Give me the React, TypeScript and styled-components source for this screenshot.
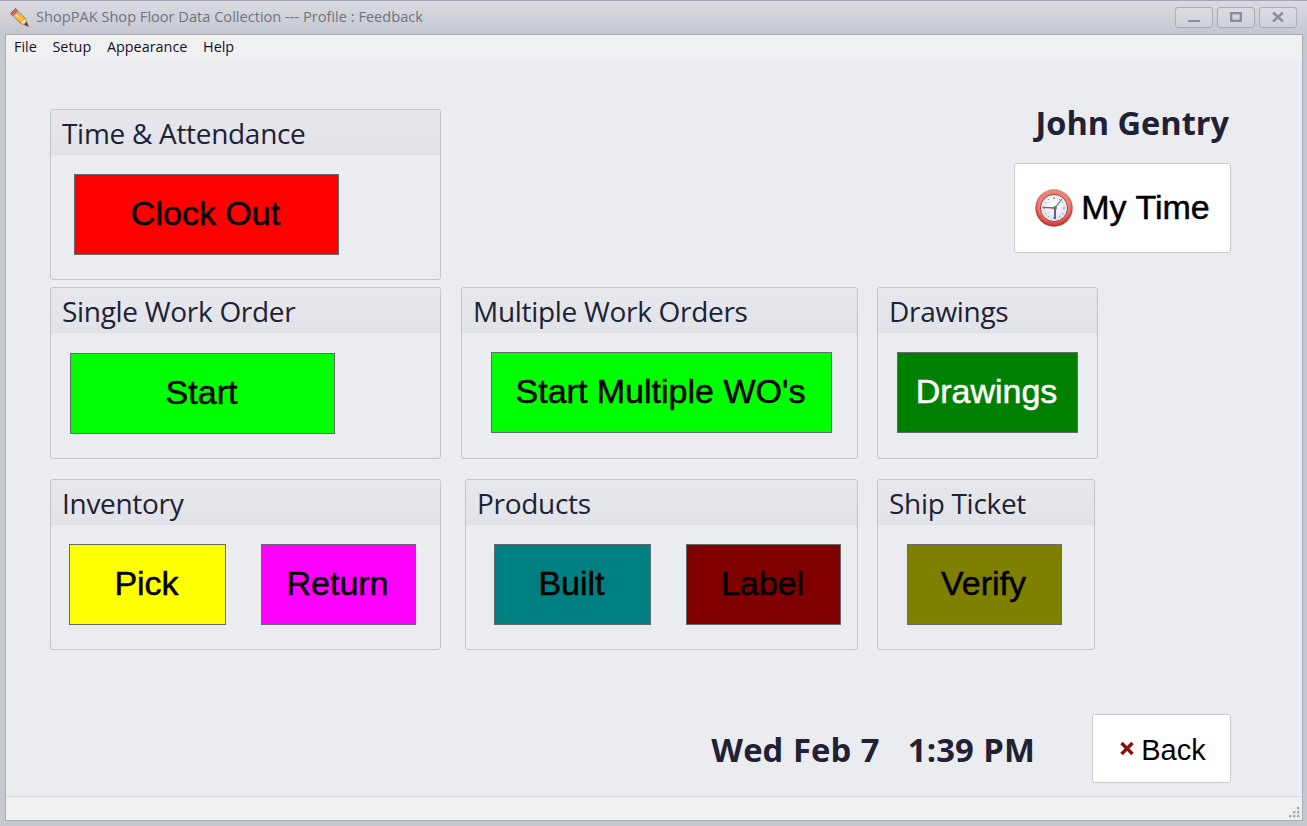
import React from "react";
import styled, { createGlobalStyle } from "styled-components";

const Global = createGlobalStyle`
  html, body { margin: 0; padding: 0; background: #c6c8d0; }
  * { box-sizing: border-box; }
`;

const Frame = styled.div`
  width: 1307px;
  height: 826px;
  display: flex;
  flex-direction: column;
  overflow: hidden;
  background: #c6c8d0;
  border-top: 1px solid #a4a6b4;
`;

const TitleBar = styled.div`
  height: 33px;
  flex: none;
  display: flex;
  align-items: center;
  padding: 0 10px 0 9px;
  background: linear-gradient(#dadbe1, #c5c7cf);
`;

const TitleText = styled.span`
  margin-left: 6px;
  padding-bottom: 3px;
  flex: 1;
  font: 14.6px "Open Sans", "Noto Sans", sans-serif;
  color: #6f7384;
  white-space: nowrap;
`;

const WinButtons = styled.div`
  display: flex;
  gap: 4px;
  margin-top: -1px;
`;

const WinButton = styled.div`
  width: 38px;
  height: 21px;
  border: 1px solid #a9abb5;
  border-radius: 3px;
  background: linear-gradient(#dcdde2, #cfd1d8);
  display: flex;
  align-items: center;
  justify-content: center;
`;

const Client = styled.div`
  flex: 1;
  min-height: 0;
  margin: 0 4px 5px 5px;
  border: 1px solid #a9abb7;
  display: flex;
  flex-direction: column;
  background: #ebecf0;
`;

const MenuBar = styled.div`
  height: 25px;
  flex: none;
  display: flex;
  gap: 15.7px;
  align-items: center;
  padding: 0 0 3px 8px;
  background: #f0f0f0;
  font: 14.4px "Open Sans", "Noto Sans", sans-serif;
  color: #14142a;
`;

const MenuItem = styled.span``;

const Body = styled.div`
  flex: 1;
  min-height: 0;
  display: flex;
  flex-direction: column;
  padding: 49px 0 0 44px;
`;

const Row = styled.div<{ $mt?: number }>`
  display: flex;
  align-items: flex-start;
  margin-top: ${(p) => p.$mt ?? 0}px;
`;

const Panel = styled.section<{ $w: number; $h: number; $ml?: number }>`
  width: ${(p) => p.$w}px;
  height: ${(p) => p.$h}px;
  margin-left: ${(p) => p.$ml ?? 0}px;
  flex: none;
  border: 1px solid #c4c5cc;
  border-radius: 3px;
  background: #ebecf0;
  overflow: hidden;
`;

const PanelTitle = styled.h2`
  margin: 0;
  height: 45px;
  padding: 2px 0 0 11px;
  display: flex;
  align-items: center;
  background: linear-gradient(#e7e8ec, #e2e3e8);
  border-bottom: 1px solid #dfe0e5;
  font: 400 28px "Open Sans", "Noto Sans", sans-serif;
  letter-spacing: -0.3px;
  color: #212135;
  white-space: nowrap;
`;

const PanelBody = styled.div<{ $pl: number; $pt: number; $gap?: number }>`
  display: flex;
  gap: ${(p) => p.$gap ?? 0}px;
  padding: ${(p) => p.$pt}px 0 0 ${(p) => p.$pl}px;
`;

const ActionButton = styled.button<{ $w: number; $bg: string; $fg?: string }>`
  width: ${(p) => p.$w}px;
  height: 81px;
  flex: none;
  padding: 0 2px 3px 0;
  background: ${(p) => p.$bg};
  border: 1px solid #666a70;
  color: ${(p) => p.$fg ?? "#000"};
  font: 400 34px "Liberation Sans", Arial, sans-serif;
  -webkit-text-stroke: 0.5px currentColor;
`;

const SideColumn = styled.div`
  flex: none;
  width: 217px;
  margin-left: 573px;
  display: flex;
  flex-direction: column;
  align-items: flex-end;
`;

const UserName = styled.div`
  margin: -9px 2px 0 0;
  height: 63px;
  font: 700 32.5px "Open Sans", "Noto Sans", sans-serif;
  color: #212135;
  white-space: nowrap;
`;

const WhiteButton = styled.button<{ $w: number; $h: number; $gap: number; $size: number; $pl?: number }>`
  width: ${(p) => p.$w}px;
  height: ${(p) => p.$h}px;
  display: flex;
  align-items: center;
  justify-content: center;
  gap: ${(p) => p.$gap}px;
  padding: 0 0 0 ${(p) => p.$pl ?? 0}px;
  background: #fff;
  border: 1px solid #c8c9ce;
  border-radius: 3px;
  color: #000;
  font: 400 ${(p) => p.$size}px "Liberation Sans", Arial, sans-serif;
`;

const MyTimeLabel = styled.span`
  -webkit-text-stroke: 0.5px currentColor;
  padding-bottom: 2px;
`;

const BackLabel = styled.span`
  padding-top: 3px;
`;

const Footer = styled.div`
  display: flex;
  justify-content: flex-end;
  align-items: center;
  gap: 57px;
  margin-top: 64px;
  padding-right: 71px;
`;

const DateText = styled.div`
  padding-top: 2px;
  font: 700 32.8px "Open Sans", "Noto Sans", sans-serif;
  letter-spacing: 0.1px;
  word-spacing: 0.8px;
  color: #212135;
  white-space: pre;
`;

const StatusBar = styled.div`
  height: 24px;
  flex: none;
  border-top: 1px solid #d9dade;
  background: #f0f0f0;
  display: flex;
  justify-content: flex-end;
  align-items: flex-end;
  padding: 0 2px 2px 0;
`;

const Pencil = () => (
  <svg width="21" height="21" viewBox="0 0 21 21">
    <path d="M1.5 6.5 L6.5 1.5 L16 11 L19.5 19.5 L11 16 Z" fill="#f6b72c" stroke="#a9712a" strokeWidth="0.7" strokeLinejoin="round" />
    <path d="M1.5 6.5 L6.5 1.5 L9 4 L4 9 Z" fill="#e0635a" stroke="#a34a44" strokeWidth="0.6" />
    <path d="M4 9 L9 4 L10.5 5.5 L5.5 10.5 Z" fill="#b9b6ad" />
    <path d="M7 8 L14 15" stroke="#fde08a" strokeWidth="1.6" />
    <path d="M9.5 11.5 L14.5 16" stroke="#d98a1e" strokeWidth="0.9" />
    <path d="M11 16 L16 11 L19.5 19.5 Z" fill="#efd6a6" stroke="#a9712a" strokeWidth="0.4" />
    <path d="M17.3 14.8 L19.5 19.5 L15 17.6 Z" fill="#4a3d33" />
  </svg>
);

const MinIcon = () => (
  <svg width="12" height="10" viewBox="0 0 12 10"><rect x="0" y="8" width="12" height="2.4" fill="#8c8e9c" /></svg>
);
const MaxIcon = () => (
  <svg width="12" height="10" viewBox="0 0 12 10"><rect x="1.2" y="1.2" width="9.6" height="7.6" fill="none" stroke="#8c8e9c" strokeWidth="2.4" /></svg>
);
const CloseIcon = () => (
  <svg width="12" height="10" viewBox="0 0 12 10"><path d="M1 0.5 L11 9.5 M11 0.5 L1 9.5" stroke="#8c8e9c" strokeWidth="2.6" /></svg>
);

const ClockIcon = () => (
  <svg width="38" height="38" viewBox="0 0 38 38">
    <defs>
      <radialGradient id="rim" cx="50%" cy="42%" r="58%">
        <stop offset="70%" stopColor="#e9837a" />
        <stop offset="86%" stopColor="#d2483f" />
        <stop offset="100%" stopColor="#b5342c" />
      </radialGradient>
      <radialGradient id="face" cx="50%" cy="40%" r="60%">
        <stop offset="0%" stopColor="#ffffff" />
        <stop offset="100%" stopColor="#d6deea" />
      </radialGradient>
    </defs>
    <circle cx="19" cy="19" r="18.7" fill="url(#rim)" />
    <circle cx="19" cy="19" r="13.6" fill="url(#face)" stroke="#b23a32" strokeWidth="1" />
    <g fill="#7f90a6">
      <circle cx="19" cy="9" r="0.9" /><circle cx="19" cy="29" r="0.9" />
      <circle cx="9" cy="19" r="0.9" /><circle cx="29" cy="19" r="0.9" />
      <circle cx="24.5" cy="10.5" r="0.6" /><circle cx="27.5" cy="13.5" r="0.6" />
      <circle cx="13.5" cy="10.5" r="0.6" /><circle cx="10.5" cy="13.5" r="0.6" />
      <circle cx="27.5" cy="24.5" r="0.6" /><circle cx="24.5" cy="27.5" r="0.6" />
      <circle cx="10.5" cy="24.5" r="0.6" /><circle cx="13.5" cy="27.5" r="0.6" />
    </g>
    <path d="M20 19 L7.5 18.4" stroke="#c8453c" strokeWidth="1.3" />
    <path d="M20 18.8 L27 10" stroke="#66778d" strokeWidth="1.2" />
    <path d="M20 19 L20 30" stroke="#4f607a" strokeWidth="1.9" />
    <circle cx="20" cy="19" r="1.9" fill="#5f7088" />
  </svg>
);

const XIcon = () => (
  <svg width="14" height="15" viewBox="0 0 14 15">
    <path d="M1.5 2 L12.5 13 M12.5 2 L1.5 13" stroke="#8c0d0d" strokeWidth="3.4" />
  </svg>
);

const Grip = () => (
  <svg width="12" height="12" viewBox="0 0 12 12" fill="#a9abb3">
    <rect x="9" y="1" width="2.4" height="2.4" />
    <rect x="5" y="5" width="2.4" height="2.4" /><rect x="9" y="5" width="2.4" height="2.4" />
    <rect x="1" y="9" width="2.4" height="2.4" /><rect x="5" y="9" width="2.4" height="2.4" /><rect x="9" y="9" width="2.4" height="2.4" />
  </svg>
);

export default function App() {
  return (
    <>
      <Global />
      <Frame>
        <TitleBar>
          <Pencil />
          <TitleText>ShopPAK Shop Floor Data Collection --- Profile : Feedback</TitleText>
          <WinButtons>
            <WinButton><MinIcon /></WinButton>
            <WinButton><MaxIcon /></WinButton>
            <WinButton><CloseIcon /></WinButton>
          </WinButtons>
        </TitleBar>
        <Client>
          <MenuBar>
            <MenuItem>File</MenuItem>
            <MenuItem>Setup</MenuItem>
            <MenuItem>Appearance</MenuItem>
            <MenuItem>Help</MenuItem>
          </MenuBar>
          <Body>
            <Row>
              <Panel $w={391} $h={171}>
                <PanelTitle>Time &amp; Attendance</PanelTitle>
                <PanelBody $pl={23} $pt={19}>
                  <ActionButton $w={265} $bg="#ff0000">Clock Out</ActionButton>
                </PanelBody>
              </Panel>
              <SideColumn>
                <UserName>John Gentry</UserName>
                <WhiteButton $w={217} $h={90} $gap={8} $size={34}>
                  <ClockIcon />
                  <MyTimeLabel>My Time</MyTimeLabel>
                </WhiteButton>
              </SideColumn>
            </Row>
            <Row $mt={7}>
              <Panel $w={391} $h={172}>
                <PanelTitle>Single Work Order</PanelTitle>
                <PanelBody $pl={19} $pt={20}>
                  <ActionButton $w={265} $bg="#00ff00">Start</ActionButton>
                </PanelBody>
              </Panel>
              <Panel $w={397} $h={172} $ml={20}>
                <PanelTitle>Multiple Work Orders</PanelTitle>
                <PanelBody $pl={29} $pt={19}>
                  <ActionButton $w={341} $bg="#00ff00">Start Multiple WO's</ActionButton>
                </PanelBody>
              </Panel>
              <Panel $w={221} $h={172} $ml={19}>
                <PanelTitle>Drawings</PanelTitle>
                <PanelBody $pl={19} $pt={19}>
                  <ActionButton $w={181} $bg="#008000" $fg="#fff">Drawings</ActionButton>
                </PanelBody>
              </Panel>
            </Row>
            <Row $mt={20}>
              <Panel $w={391} $h={171}>
                <PanelTitle>Inventory</PanelTitle>
                <PanelBody $pl={18} $pt={19} $gap={35}>
                  <ActionButton $w={157} $bg="#ffff00">Pick</ActionButton>
                  <ActionButton $w={155} $bg="#ff00ff">Return</ActionButton>
                </PanelBody>
              </Panel>
              <Panel $w={393} $h={171} $ml={24}>
                <PanelTitle>Products</PanelTitle>
                <PanelBody $pl={28} $pt={19} $gap={35}>
                  <ActionButton $w={157} $bg="#008080">Built</ActionButton>
                  <ActionButton $w={155} $bg="#800000">Label</ActionButton>
                </PanelBody>
              </Panel>
              <Panel $w={218} $h={171} $ml={19}>
                <PanelTitle>Ship Ticket</PanelTitle>
                <PanelBody $pl={29} $pt={19}>
                  <ActionButton $w={155} $bg="#808000">Verify</ActionButton>
                </PanelBody>
              </Panel>
            </Row>
            <Footer>
              <DateText>{"Wed Feb 7   1:39 PM"}</DateText>
              <WhiteButton $w={139} $h={69} $gap={7} $size={29} $pl={3}>
                <XIcon />
                <BackLabel>Back</BackLabel>
              </WhiteButton>
            </Footer>
          </Body>
          <StatusBar><Grip /></StatusBar>
        </Client>
      </Frame>
    </>
  );
}
